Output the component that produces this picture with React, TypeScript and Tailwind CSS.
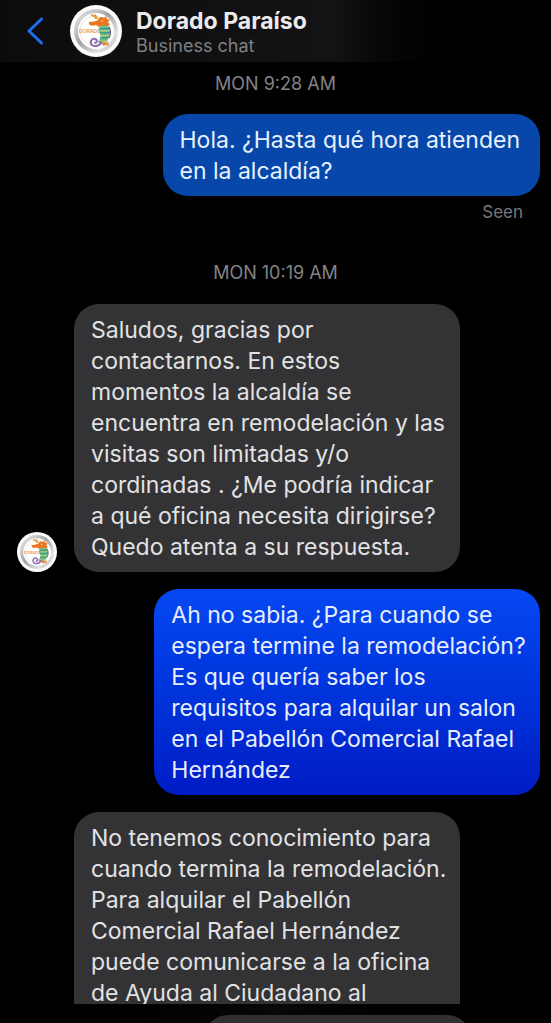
import React from 'react'

function Seahorse({ className }: { className: string }) {
  return (
    <svg viewBox="0 0 52 52" className={className} role="img" aria-label="Dorado">
      <defs>
        <linearGradient id="ring" x1="0" y1="0" x2="1" y2="1">
          <stop offset="0" stopColor="#e6e6e8" />
          <stop offset="0.25" stopColor="#c9c9cb" />
          <stop offset="0.45" stopColor="#a2a2a5" />
          <stop offset="0.75" stopColor="#e2e2e2" />
          <stop offset="1" stopColor="#b5b5b8" />
        </linearGradient>
      </defs>
      <circle cx="26" cy="26" r="26" fill="#fbfbfb" />
      <circle cx="26" cy="26" r="22" fill="url(#ring)" />
      <circle cx="26" cy="26" r="18" fill="#ffffff" />
      <circle cx="25" cy="26" r="15" fill="none" stroke="#eed9c0" strokeWidth="0.7" />
      <text x="9" y="28" fontSize="5" fontWeight="600" fill="#e99548" fontFamily="Inter, sans-serif">DORADO</text>
      {/* body */}
      <path d="M30 21c3-2 7-2 9 1 3 4 1 10-2 14-2 3-5 4-7 3l-2-2c2-3 3-5 2-8-2-3-2-6 0-8z" fill="#6fbd80" />
      <path d="M30 24c3-1 6 1 10-1M30 28c3-1 6 1 10-1M30 33c3-1 5 1 8-1" fill="none" stroke="#27909a" strokeWidth="1.2" />
      <path d="M30 26c3-1 6 1 10-1M30 31c3-1 5 1 9-1M30 36c2-1 3 1 6 0" fill="none" stroke="#d3d968" strokeWidth="1" />
      <path d="M39 22c2 3 2 7 0 11" fill="none" stroke="#77599f" strokeWidth="1.2" />
      {/* head */}
      <path d="M19 17c4 0 7-1 9-2 1-3 4-4 6-2l2-2 1 3 3 1-2 2 2 3-3 1c-3-1-6-1-8 1l-3-2c-3 1-6 1-7-1z" fill="#ec7620" />
      <path d="M21 9l3 1 2-1 1 3 2 2-4 0-1-2-3-1z" fill="#eb9a3f" />
      <circle cx="32" cy="16" r="0.7" fill="#ffffff" />
      {/* tail */}
      <path d="M31 37c-1 4-6 5-9 3-3-3 0-7 3-6 3 1 2 4 0 4" fill="none" stroke="#9068b4" strokeWidth="2" strokeLinecap="round" />
      <path d="M32 36l2 1 2 1 3-2-1 3 1 2-3-1-3 1z" fill="#e98a3b" />
    </svg>
  )
}

function Time({ children }: { children: React.ReactNode }) {
  return <p className="text-center text-lg leading-6 text-[#838385]">{children}</p>
}

function Received({ avatar, text }: { avatar?: boolean; text: string }) {
  return (
    <div className="flex items-end">
      <div className="flex w-[74px] shrink-0 justify-center">
        {avatar && <Seahorse className="h-10 w-10" />}
      </div>
      <p className="w-[70%] whitespace-pre rounded-[25px] bg-[#333335] pb-[9px] pl-[17px] pt-[11px] text-[#e2e2e4]">{text}</p>
    </div>
  )
}

export default function App() {
  return (
    <div className="flex h-screen flex-col overflow-hidden bg-black font-[Inter,sans-serif]">
      <header className="flex h-[62px] shrink-0 items-center bg-linear-to-r from-[#0c0c0d] from-0% via-[#131315] via-60% to-black to-90% pl-6">
        <button aria-label="Back" className="mr-[23px]">
          <svg viewBox="0 0 23 32" className="h-8 w-[23px]" fill="none" stroke="#1c70ef" strokeWidth="3" strokeLinecap="round" strokeLinejoin="round">
            <path d="M17.500 4 5 16 17.500 28" />
          </svg>
        </button>
        <Seahorse className="h-[52px] w-[52px] shrink-0" />
        <div className="ml-[14px] pt-1">
          <h1 className="text-[23px] font-bold leading-[26px] text-[#ebebed]">Dorado Paraíso</h1>
          <p className="text-lg leading-6 text-[#808083]">Business chat</p>
        </div>
      </header>
      <main className="min-h-0 flex-1 overflow-hidden pt-[10px] text-[23px] leading-[31px]">
        <Time>MON 9:28 AM</Time>
        <div className="mr-[11px] mt-[18px] flex flex-col items-end">
          <p className="whitespace-pre rounded-[25px] bg-[#0747a9] pb-[9px] pl-[17px] pr-5 pt-[11px] text-[#e7f1ff]">
            {'Hola. ¿Hasta qué hora atienden\nen la alcaldía?'}
          </p>
          <p className="mr-[17px] mt-1 text-[17px] leading-6 text-[#79797c]">Seen</p>
        </div>
        <div className="mt-[37px]">
          <Time>MON 10:19 AM</Time>
        </div>
        <div className="mt-[19px] flex flex-col gap-[17px]">
          <Received
            avatar
            text={`Saludos, gracias por
contactarnos. En estos
momentos la alcaldía se
encuentra en remodelación y las
visitas son limitadas y/o
cordinadas . ¿Me podría indicar
a qué oficina necesita dirigirse?
Quedo atenta a su respuesta.`}
          />
          <p className="mr-[11px] w-[70%] self-end whitespace-pre rounded-[25px] bg-linear-to-b from-[#0648f2] to-[#001bc5] pb-[9px] pl-[17px] pt-[11px] text-[#e7edff]">
            {`Ah no sabia. ¿Para cuando se
espera termine la remodelación?
Es que quería saber los
requisitos para alquilar un salon
en el Pabellón Comercial Rafael
Hernández`}
          </p>
          {/* runs on below the fold */}
          <div className="ml-[74px] w-[70%] rounded-t-[25px] bg-[#333335] pb-[9px] pl-[17px] pt-[11px] text-[#e2e2e4]">
            <p className="whitespace-pre">{`No tenemos conocimiento para
cuando termina la remodelación.
Para alquilar el Pabellón
Comercial Rafael Hernández
puede comunicarse a la oficina
de Ayuda al Ciudadano al`}</p>
          </div>
        </div>
      </main>
      <footer className="flex h-[19px] shrink-0 overflow-hidden bg-linear-to-r from-black via-[#080808] to-black pl-[204px] pr-20 pt-[11px]">
        <div className="h-12 flex-1 rounded-3xl bg-[#303032]" />
      </footer>
    </div>
  )
}
